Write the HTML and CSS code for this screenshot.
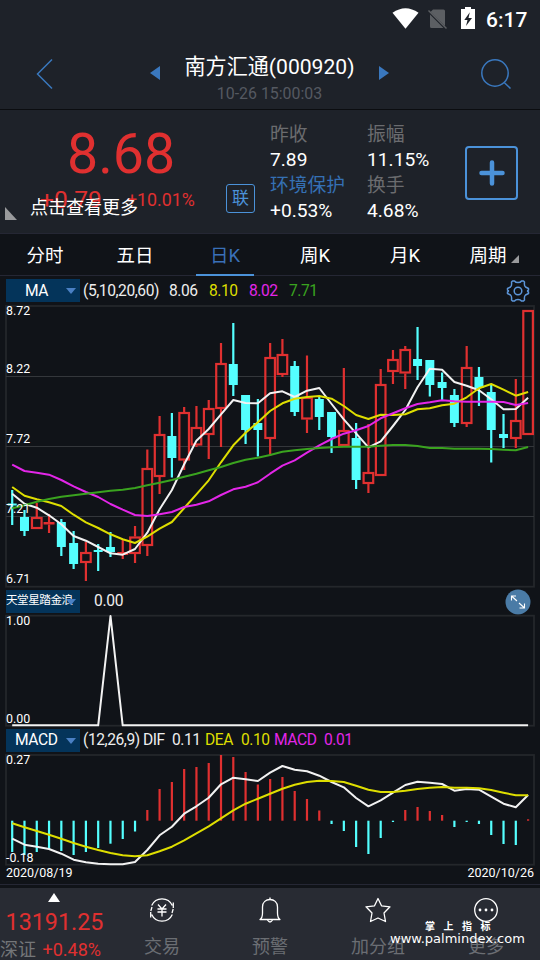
FILE: index.html
```html
<!DOCTYPE html>
<html lang="zh-CN">
    <head>
        <meta charset="utf-8">
        <title>南方汇通(000920)</title>
        <link rel="stylesheet" href="styles.css">
    </head>
    <body>
        <div class="status-bar">
            <svg class="status-icons" width="88" height="24" viewBox="392 6 88 24">
                <path d="M392.500 12.800 Q405.500 3.500 418.500 12.800 L405.500 28.800 Z" fill="#fff"/>
                <path d="M433 9.500 H443.500 Q445 9.500 445 11 V26 L430.500 12 Z M430 14.500 L443.500 28 H431.500 Q430 28 430 26.500 Z" fill="#5c5f63"/>
                <path d="M428.500 10.500 L446.500 28.500" stroke="#5c5f63" stroke-width="1.500"/>
                <path d="M461 9 H465 V7 H471 V9 H475 V29 H461 Z" fill="#fff"/>
                <path d="M469.800 12.300 L464.300 20 H467.500 L466 26 L472 18 H468.500 Z" fill="#1e2229"/>
            </svg>
            <span class="clock">6:17</span>
        </div>

        <header class="header">
            <svg class="back" width="20" height="32" viewBox="0 0 20 32"><path d="M17 1.500 L2.500 16 L17 30.500" fill="none" stroke="#3a78be" stroke-width="1.500"/></svg>
            <svg class="arrow" width="10" height="14" viewBox="0 0 10 14"><path d="M10 0 V14 L0 7 Z" fill="#3a78be"/></svg>
            <div class="stock">
                <div class="stock-name">南方汇通(000920)</div>
                <div class="stock-time">10-26 15:00:03</div>
            </div>
            <svg class="arrow" width="10" height="14" viewBox="0 0 10 14"><path d="M0 0 V14 L10 7 Z" fill="#3a78be"/></svg>
            <svg class="search" width="32" height="32" viewBox="0 0 32 32"><g fill="none" stroke="#3a78be" stroke-width="1.500"><circle cx="15" cy="15" r="13.200"/><path d="M24.200 24.500 L30.500 30.500"/></g></svg>
        </header>

        <section class="quote">
            <div class="price">
                <div class="price-now">8.68</div>
                <div class="price-change"><span class="change">+0.79</span><span class="percent">+10.01%</span></div>
                <div class="more-tip">点击查看更多</div>
                <svg class="corner" width="12" height="13" viewBox="0 0 12 13"><path d="M0 0 L12 13 H0 Z" fill="#999a9c"/></svg>
            </div>
            <div class="badge">联</div>
            <dl class="facts">
                <dt>昨收</dt>
                <dd>7.89</dd>
                <dt class="sector">环境保护</dt>
                <dd>+0.53%</dd>
            </dl>
            <dl class="facts">
                <dt>振幅</dt>
                <dd>11.15%</dd>
                <dt>换手</dt>
                <dd>4.68%</dd>
            </dl>
            <button class="add">
                <svg width="26" height="26" viewBox="0 0 26 26"><path d="M13 2.500 V23.500 M2.500 13 H23.500" stroke="#4b92d9" stroke-width="4.500" stroke-linecap="round"/></svg>
            </button>
        </section>

        <nav class="tabs">
            <span class="tab">分时</span>
            <span class="tab">五日</span>
            <span class="tab active">日K</span>
            <span class="tab">周K</span>
            <span class="tab">月K</span>
            <span class="tab period">周期<svg width="8" height="8" viewBox="0 0 8 8"><path d="M8 0 V8 H0 Z" fill="#999a9c"/></svg></span>
        </nav>

        <div class="legend legend-ma">
            <span class="picker">MA<i class="caret"></i></span>
            <span class="params">(5,10,20,60)</span>
            <span class="value v1">8.06</span>
            <span class="value v2 yellow">8.10</span>
            <span class="value v3 magenta">8.02</span>
            <span class="value v4 green">7.71</span>
            <svg class="gear" width="24" height="24" viewBox="-12 -12 24 24"><g fill="none" stroke="#5c95d8" stroke-width="1.500" stroke-linejoin="round"><path d="M-5.500 -10 H-3.500 Q-2.500 -8.500 0 -8.500 Q2.500 -8.500 3.500 -10 H5.500 L6.500 -9 Q6 -5 7.500 -4 L10.500 -2.500 V-1 Q8.500 0 10.500 1 V2.500 L7.500 4 Q6 5 6.500 9 L5.500 10 H3.500 Q2.500 8.500 0 8.500 Q-2.500 8.500 -3.500 10 H-5.500 L-6.500 9 Q-6 5 -7.500 4 L-10.500 2.500 V1 Q-8.500 0 -10.500 -1 V-2.500 L-7.500 -4 Q-6 -5 -6.500 -9 Z"/><circle r="3.800"/></g></svg>
        </div>
        <svg id="kline" class="chart" width="540" height="282" viewBox="0 305 540 282"></svg>

        <div class="legend legend-custom">
            <span class="picker custom">天堂星踏金浪<i class="caret"></i></span>
            <span class="value v0">0.00</span>
            <svg class="expand" width="26" height="26" viewBox="0 0 26 26"><circle cx="13" cy="13" r="12.500" fill="#4a7ba6"/><path d="M6.500 11.500 V7 H11 M6.500 7 L12 12 M14.500 19 H19.500 V14.500 M19.500 19 L14 14" fill="none" stroke="#fff" stroke-width="1.100"/></svg>
        </div>
        <svg id="custom" class="chart" width="540" height="113" viewBox="0 614 540 113"></svg>

        <div class="legend legend-macd">
            <span class="picker macd">MACD<i class="caret"></i></span>
            <span class="params">(12,26,9)</span>
            <span class="value m1">DIF</span><span class="value m2">0.11</span>
            <span class="value m3 yellow">DEA</span><span class="value m4 yellow">0.10</span>
            <span class="value m5 magenta">MACD</span><span class="value m6 magenta">0.01</span>
        </div>
        <svg id="macd" class="chart" width="540" height="112" viewBox="0 754 540 112"></svg>
        <div class="dates"><span>2020/08/19</span><span>2020/10/26</span></div>

        <footer class="footer">
            <div class="index">
                <svg width="12" height="9" viewBox="0 0 12 9"><path d="M6 0 L12 9 H0 Z" fill="#fff"/></svg>
                <div class="index-value">13191.25</div>
                <div class="index-name">深证 <span>+0.48%</span></div>
            </div>
            <div class="action">
                <svg width="28" height="28" viewBox="-14 -14 28 28"><g fill="none" stroke="#fff" stroke-width="1.300"><path d="M-10.300 -4.500 A11.300 11.300 0 0 1 10.300 -4.500 M10.300 4.500 A11.300 11.300 0 0 1 -10.300 4.500 M11.300 -7.500 V-2 M-11.300 7.500 V2 M11.200 -1 L10 3 M-11.200 1 L-10 -3"/><path d="M-4 -5.500 L0 -1 L4 -5.500 M-4.500 -1 H4.500 M-4.500 2 H4.500 M0 -1 V6.500"/></g></svg>
                <span>交易</span>
            </div>
            <div class="action">
                <svg width="28" height="28" viewBox="-14 -14 28 28"><g fill="none" stroke="#fff" stroke-width="1.300" stroke-linejoin="round"><path d="M-10 9.500 Q-7.500 8 -7.500 3 V-3 C-7.500 -8 -4 -10.500 0 -10.500 C4 -10.500 7.500 -8 7.500 -3 V3 Q7.500 8 10 9.500 Z"/><path d="M0 -12.500 V-10.500 M-2.500 10 Q0 14 2.500 10"/></g></svg>
                <span>预警</span>
            </div>
            <div class="action">
                <svg width="28" height="28" viewBox="-14 -14 28 28"><path d="M0 -11.500 L3.500 -4.200 L12 -3.200 L6 3 L7.500 11.500 L0 8 L-7.500 11.500 L-6 3 L-12 -3.200 L-3.500 -4.200 Z" fill="none" stroke="#fff" stroke-width="1.300" stroke-linejoin="round"/></svg>
                <span>加分组</span>
            </div>
            <div class="action">
                <svg width="28" height="28" viewBox="-14 -14 28 28"><circle r="11.300" fill="none" stroke="#fff" stroke-width="1.300"/><g fill="#fff"><circle cx="-6" r="1.400"/><circle r="1.400"/><circle cx="6" r="1.400"/></g></svg>
                <span>更多</span>
            </div>
            <div class="watermark">
                <div class="watermark-name">掌上指标</div>
                <div class="watermark-url">www.palmindex.com</div>
            </div>
        </footer>
        <script src="charts.js"></script>
    </body>
</html>
```
FILE: styles.css
```css
* {
    box-sizing: border-box;
}

body {
    margin: 0;
    width: 540px;
    height: 960px;
    overflow: hidden;
    background-color: #101318;
    color: #fff;
    font-family: Roboto, "Noto Sans CJK SC", sans-serif;
}

svg {
    display: block;
    flex: none;
}

.status-bar {
    display: flex;
    height: 38px;
    padding: 6px 12px 0 0;
    justify-content: flex-end;
    background-color: #1e2229;
}

.clock {
    width: 42px;
    margin-left: 6px;
    font-size: 21px;
    font-weight: 500;
    line-height: 28px;
    white-space: nowrap;
}

.header {
    display: flex;
    height: 72px;
    align-items: flex-start;
    background-color: #1e2229;
    border-bottom: 1px solid #0b0d10;
}

.back {
    margin: 20px 0 0 35px;
}

.arrow {
    margin-top: 28px;
}

.back + .arrow {
    margin-left: 95px;
}

.stock {
    width: 219px;
    text-align: center;
    white-space: nowrap;
}

.stock-name {
    margin-top: 15px;
    font-size: 21.100px;
    line-height: 28px;
}

.stock-time {
    margin-top: 3px;
    font-size: 15.900px;
    line-height: 20px;
    color: #555961;
}

.search {
    margin: 20px 0 0 91px;
}

.quote {
    display: flex;
    height: 124px;
    background-color: #1e2229;
    border-bottom: 1px solid #252734;
}

.price {
    position: relative;
    width: 226px;
    color: #e03030;
}

.price-now {
    height: 68px;
    padding: 15px 0 0 67px;
    font-size: 55.500px;
    line-height: 60px;
}

.price-change {
    display: flex;
    margin-top: 8px;
    padding-left: 40px;
    line-height: 28px;
}

.change {
    width: 87px;
    font-size: 24.500px;
}

.percent {
    font-size: 17.800px;
}

/* hint laid over the change values */
.more-tip {
    position: absolute;
    left: 30px;
    top: 85px;
    font-size: 18px;
    line-height: 26px;
    color: #fff;
}

.corner {
    position: absolute;
    left: 5px;
    top: 97px;
}

.badge {
    width: 29px;
    height: 29px;
    margin: 74px 15px 0 0;
    border: 1.500px solid #4b92d9;
    border-radius: 3px;
    font-size: 17px;
    line-height: 27px;
    text-align: center;
    color: #4b92d9;
}

.facts {
    width: 97px;
    margin: 13px 0 0;
    font-size: 19.200px;
    white-space: nowrap;
}

.facts dt {
    height: 24px;
    font-size: 18.800px;
    line-height: 25px;
    color: #6b6c6f;
}

.facts .sector {
    color: #3570b4;
}

.facts dd {
    height: 27px;
    margin: 0;
    line-height: 26px;
}

.add {
    display: flex;
    width: 53px;
    height: 54px;
    margin: 36px 0 0 1px;
    padding: 0;
    align-items: center;
    justify-content: center;
    background: none;
    border: 2px solid #4b92d9;
    border-radius: 4px;
}

.tabs {
    display: flex;
    height: 42px;
    border-bottom: 1px solid #252734;
}

.tab {
    display: flex;
    width: 90px;
    height: 42px;
    justify-content: center;
    font-size: 18.500px;
    line-height: 44px;
}

.tab.active {
    width: 58px;
    margin: 0 16px;
    color: #3a70b8;
    border-bottom: 2px solid #4b92d9;
}

.period {
    padding-right: 2px;
}

.period svg {
    margin: 21px 0 0 4px;
}

.legend {
    display: flex;
    height: 29px;
    padding: 3px 10px 0 6px;
    font-size: 15.600px;
    line-height: 23px;
    letter-spacing: -0.45px;
    color: #eee;
    white-space: nowrap;
}

.legend-ma {
    line-height: 25px;
}

.picker {
    position: relative;
    width: 74px;
    height: 23px;
    margin-right: 3px;
    padding-left: 19px;
    background-color: #04345a;
    color: #fff;
}

.caret {
    position: absolute;
    right: 4px;
    top: 9px;
    border: 5px solid transparent;
    border-top: 6px solid #4a80c4;
    border-bottom: 0;
}

.params {
    width: 86px;
}

.v1, .v2, .v3, .v4 {
    width: 40px;
}

.yellow {
    color: #dede00;
}

.magenta {
    color: #e326e8;
}

.green {
    color: #3aa31f;
}

.gear {
    margin-left: auto;
}

.legend-custom {
    height: 27px;
}

.custom {
    padding-left: 0;
    font-size: 11.600px;
    letter-spacing: -0.5px;
    line-height: 21px;
}

.v0 {
    margin-left: 11px;
    letter-spacing: -0.3px;
}

.expand {
    margin: -1px -1px 0 auto;
}

.legend-macd {
    height: 27px;
    padding-top: 2px;
}

.macd {
    padding-left: 9px;
}

.legend-macd .params {
    width: 60px;
}

.m1 {
    width: 29px;
}

.m2 {
    width: 33px;
}

.m3 {
    width: 36px;
}

.m4 {
    width: 33px;
}

.m5 {
    width: 50px;
}

.chart {
    overflow: visible;
}

.chart text {
    font-size: 12.400px;
    fill: #fff;
}

.dates {
    display: flex;
    height: 19px;
    padding: 0 6px;
    justify-content: space-between;
    border-bottom: 1px solid #252734;
    font-size: 12.500px;
    line-height: 14px;
}

.footer {
    position: relative;
    display: flex;
    height: 72px;
    margin-top: 3px;
    background-color: #282b33;
}

.index, .action {
    display: flex;
    width: 108px;
    flex-direction: column;
    align-items: center;
    white-space: nowrap;
}

.index svg {
    margin-top: 5px;
}

.index-value {
    margin: 6px 0 0 1px;
    font-size: 23.300px;
    line-height: 28px;
    color: #e03030;
}

.index-name {
    width: 108px;
    font-size: 18px;
    line-height: 28px;
    color: #747679;
}

.index-name span {
    margin-left: 2px;
    color: #e03030;
}

.action svg {
    margin-top: 8px;
}

.action span {
    margin-top: 11px;
    font-size: 18px;
    line-height: 24px;
    color: #6b6e73;
}

/* site mark over the last two buttons */
.watermark {
    position: absolute;
    left: 390px;
    top: 33px;
}

.watermark-name {
    padding-left: 35px;
    font-size: 10px;
    font-weight: 700;
    line-height: 12px;
    letter-spacing: 8.500px;
}

.watermark-url {
    font-family: "DejaVu Sans", sans-serif;
    font-size: 13px;
    line-height: 11px;
}
```
FILE: charts.js
```js
var RED = '#e03030';
var CYAN = '#54ffff';
var WHITE = '#f2f2f2';
var YELLOW = '#dede00';
var MAGENTA = '#e326e8';
var GREEN = '#3aa31f';

// one row per day: up (1) or down (0), high, body top, body bottom, low
var candles = [
    [0, 490, 503.5, 505.5, 525], [0, 510, 517, 531, 536], [1, 503, 517, 529, 529],
    [1, 514, 522, 524.5, 533], [0, 519, 522, 547, 556], [0, 531, 543, 564, 569],
    [1, 542, 552, 563, 581], [0, 544, 550, 552, 571], [0, 532, 547, 552, 557],
    [1, 540, 552, 555, 559], [1, 526, 536.5, 554, 563], [1, 449.5, 468, 546, 556],
    [1, 416, 434, 477, 494], [0, 413, 436, 458, 477.5], [1, 407, 412, 460.5, 470],
    [1, 406, 427, 445.5, 447], [1, 400, 408, 435, 459], [1, 343, 363, 409, 447],
    [0, 323, 364, 385, 396], [0, 395, 395, 430, 444], [0, 399, 423, 430, 456.5],
    [1, 343, 357, 439, 456], [1, 339, 354, 375, 377], [0, 361, 366, 412, 416],
    [1, 355.5, 397, 419.5, 433], [0, 396.5, 399, 417, 430], [0, 412, 412, 437, 453],
    [1, 368, 430, 446, 446], [0, 423, 438, 480, 489], [1, 424, 472, 484, 493],
    [1, 369, 384, 476, 476], [1, 350, 359, 372, 384], [1, 346, 349, 373.5, 389],
    [0, 327, 359, 366, 380], [0, 360, 360, 385, 396.5], [0, 372.5, 382, 388, 401],
    [0, 389, 395, 423, 427], [1, 346, 367, 424, 427], [0, 367, 377, 388, 406],
    [0, 385, 392, 430, 462.5], [0, 414, 434, 438, 448], [1, 379, 420, 439, 448],
    [1, 310, 310, 435, 435]
];

var ma5 = [493.7, 503.7, 507.7, 515.3, 524.3, 536, 540.7, 547, 553.3, 554.7, 549, 532.7, 509.3, 490, 464.3, 440.7, 429, 414.3, 400, 403, 403.3, 393.3, 391.3, 397, 390.7, 388, 404, 419.3, 433.3, 447.3, 441.3, 426, 410, 387.3, 368.7, 369.7, 382, 385.7, 390.3, 399.3, 409.3, 409, 397.7];
var ma10 = [487, 495.7, 499.3, 502.3, 506, 514.7, 522.3, 528, 534.3, 539.3, 543, 536.7, 528.7, 522, 508, 494.3, 480.3, 462.3, 445.3, 432.7, 422.3, 411, 403.3, 398.7, 397, 396, 398.7, 406, 415, 419, 414.7, 415, 414.3, 409.3, 408.3, 405.3, 403.7, 397.3, 388.3, 384, 389.7, 395.7, 392];
var ma20 = [464.7, 471, 472.7, 474.7, 480, 486.3, 492, 497, 504, 509.7, 515, 516, 514.3, 512, 507, 504.7, 501.3, 495, 489.3, 486.7, 482.3, 473.7, 465.7, 460.3, 452.7, 445.3, 439, 433.7, 430.3, 426, 418.3, 413.3, 408.3, 404, 402.3, 400.3, 401.3, 401.7, 401.7, 401.7, 402, 405, 403];
var ma60 = [508.3, 505.3, 501.7, 499, 496.7, 495.3, 493.7, 492.3, 490.7, 489.7, 488, 485.3, 482.7, 480, 476.7, 473.7, 470.3, 467, 463, 459.7, 457.7, 455, 451.7, 450.3, 449, 448, 447.3, 446.7, 446.7, 446.7, 445.7, 445, 445, 446, 448, 448, 448.7, 448.7, 448.7, 449, 449.7, 450.3, 447];

var bars = [852, 855, 852, 849, 851, 855, 852, 848, 843.7, 839, 831.5, 810, 789, 782, 769, 767, 763, 755, 757, 772, 784.5, 779, 777, 791, 799, 810.5, 824, 831, 847, 854, 838, 822, 810, 807, 811, 815, 827, 822, 824, 835, 844, 845, 819.3];
var dif = [838.7, 844.7, 846.7, 849, 853.7, 859.7, 862.3, 863.7, 864.3, 864.3, 862, 850, 835.3, 826.7, 813.7, 806.3, 797.7, 784.3, 777.7, 779.3, 781, 772.7, 766, 769.7, 771.3, 775.7, 782, 787.3, 798, 806.3, 800.3, 792.7, 785, 781.7, 782.7, 784, 790.7, 789, 789.7, 796.7, 803.7, 807.3, 795];
var dea = [823.3, 827.3, 831, 834.7, 838.7, 843, 846.7, 850, 853, 855.3, 856.3, 855.3, 851.3, 846.7, 840.3, 833.3, 826.3, 818.3, 810.3, 803.7, 798.7, 793.7, 788.7, 784.7, 782, 780.7, 781, 782, 785.7, 789.7, 792, 792, 790.7, 789, 787.7, 787, 787.7, 787.7, 788.3, 790, 792.7, 795.3, 795.3];

function x(i) {
    return 12.2 + i * 12.283;
}

function rect(left, top, width, height, fill, stroke, lineWidth) {
    return '<rect x="' + left + '" y="' + top + '" width="' + width + '" height="' + height +
        '" fill="' + fill + '" stroke="' + (stroke || 'none') + '" stroke-width="' + (lineWidth || 0) + '"/>';
}

function line(values, color) {
    var points = values.map(function (y, i) { return x(i).toFixed(1) + ',' + y; }).join(' ');
    return '<polyline points="' + points + '" fill="none" stroke="' + color + '" stroke-width="2" stroke-linejoin="round"/>';
}

function label(y, text) {
    return '<text x="6" y="' + y + '">' + text + '</text>';
}

function frame(top, bottom) {
    return rect(6, top, 528, bottom - top, 'none', '#24272b', 1.8);
}

function drawKline() {
    var out = frame(306, 586.7);
    [376.5, 446.5, 516.5].forEach(function (y) {
        out += rect(6, y - 0.5, 528, 1, '#34373b');
    });
    candles.forEach(function (c, i) {
        var cx = x(i);
        var color = c[0] ? RED : CYAN;
        if (c[0]) {
            out += rect(cx - 1.1, c[1], 2.2, c[2] - c[1], color) + rect(cx - 1.1, c[3], 2.2, c[4] - c[3], color);
            if (c[3] - c[2] < 5) {
                out += rect(cx - 5.5, c[2], 11, c[3] - c[2], color);
            } else {
                out += rect(cx - 4.8, c[2] + 1, 9.6, c[3] - c[2] - 2, 'none', color, 2.2);
            }
        } else {
            out += rect(cx - 1.1, c[1], 2.2, c[4] - c[1], color) + rect(cx - 4.5, c[2], 9, c[3] - c[2], color);
        }
    });
    out += line(ma5, WHITE) + line(ma10, YELLOW) + line(ma20, MAGENTA) + line(ma60, GREEN);
    out += label(315, '8.72') + label(373, '8.22') + label(443, '7.72') + label(513, '7.21') + label(583, '6.71');
    document.getElementById('kline').innerHTML = out;
}

function drawCustom() {
    var signal = candles.map(function (c, i) { return i === 8 ? 616 : 725.3; });
    document.getElementById('custom').innerHTML =
        frame(615.7, 725.7) + line(signal, WHITE) + label(625, '1.00') + label(723, '0.00');
}

function drawMacd() {
    var zero = 820.7;
    var out = frame(755, 864.7);
    bars.forEach(function (y, i) {
        out += rect(x(i) - 1.1, Math.min(y, zero), 2.2, Math.abs(y - zero), y < zero ? RED : CYAN);
    });
    out += line(dif, WHITE) + line(dea, YELLOW) + label(764, '0.27') + label(862, '-0.18');
    document.getElementById('macd').innerHTML = out;
}

drawKline();
drawCustom();
drawMacd();
```
